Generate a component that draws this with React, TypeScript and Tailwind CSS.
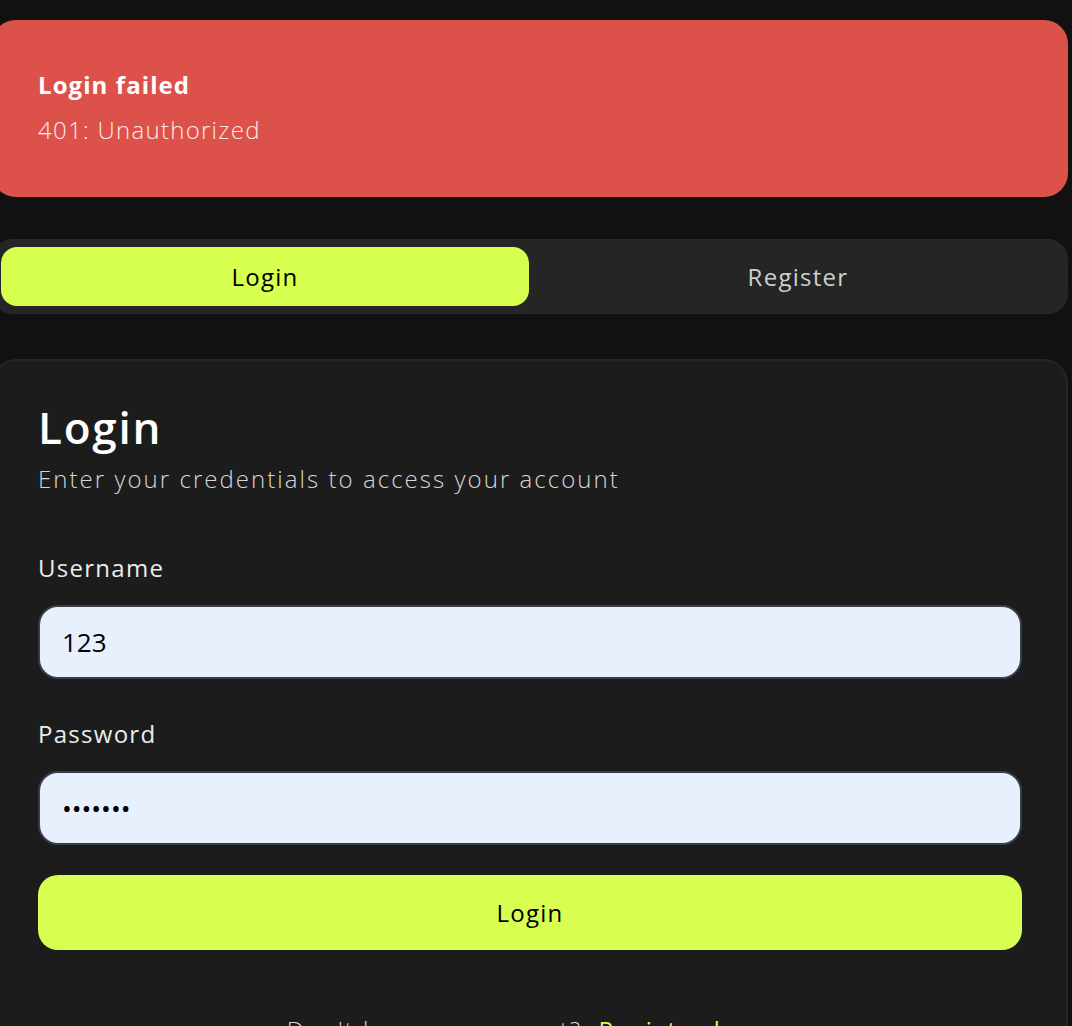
import { useState } from 'react';

const App = () => {
  const [tab, setTab] = useState<'login' | 'register'>('login');
  const [username, setUsername] = useState('123');
  const [password, setPassword] = useState('1234567');

  return (
    <div className="min-h-screen bg-[#111111] font-['Open_Sans',sans-serif] text-white overflow-hidden tracking-[0.08em]">
      <div className="-ml-2 mr-1 pt-5">
        <div className="rounded-[24px] bg-[#dc524b] pl-[46px] pt-[49px] pb-[51px]">
          <div className="text-[24px] font-bold leading-[32px] tracking-[0.045em]">Login failed</div>
          <div className="mt-[13px] text-[24px] font-light leading-[32px] text-[#fbe9e8]">401: Unauthorized</div>
        </div>

        <div className="mt-[42px] flex rounded-[20px] border border-[#1f2836] bg-[#252525] pl-2 py-[7px]">
          <button
            onClick={() => setTab('login')}
            className={`h-[59px] w-[528px] rounded-[16px] text-[24px] ${tab === 'login' ? 'bg-[#d7ff4f] text-black' : 'text-[#cfcfcf]'}`}
          >
            Login
          </button>
          <button
            onClick={() => setTab('register')}
            className={`h-[59px] flex-1 rounded-[16px] text-[24px] ${tab === 'register' ? 'bg-[#d7ff4f] text-black' : 'text-[#cfcfcf]'}`}
          >
            Register
          </button>
        </div>

        <div className="mt-[45px] rounded-[24px] border-2 border-[#1f2631] bg-[#1c1c1c] pl-[44px] pr-[44px] pt-[38px] pb-10">
          <h1 className="text-[44px] font-semibold leading-[56px] tracking-[0.04em]">Login</h1>
          <p className="mt-2 text-[24px] font-light leading-[32px] tracking-[0.085em] text-[#d6d6d6]">
            Enter your credentials to access your account
          </p>

          <label className="mt-[57px] block text-[24px] leading-[32px] text-[#ececec]">Username</label>
          <input
            value={username}
            onChange={(e) => setUsername(e.target.value)}
            className="mt-[21px] h-[74px] w-full rounded-[20px] border-2 border-[#363d4b] bg-[#e8effd] px-[22px] text-[26px] tracking-normal text-black outline-none"
          />

          <label className="mt-[39px] block text-[24px] leading-[32px] text-[#ececec]">Password</label>
          <input
            type="password"
            value={password}
            onChange={(e) => setPassword(e.target.value)}
            className="mt-[21px] h-[74px] w-full rounded-[20px] border-2 border-[#363d4b] bg-[#e8effd] px-[22px] text-[26px] tracking-normal text-black outline-none"
          />

          <button className="mt-[30px] h-[75px] w-full rounded-[20px] bg-[#d7fe50] text-[24px] text-black">
            Login
          </button>

          <p className="mt-[64px] text-center text-[24px] font-light leading-[32px] tracking-[0.085em] text-[#d6d6d6]">
            Don't have an account? <span className="ml-2 font-normal text-[#d7fe50]">Register here</span>
          </p>
        </div>
      </div>
    </div>
  );
};

export default App;
